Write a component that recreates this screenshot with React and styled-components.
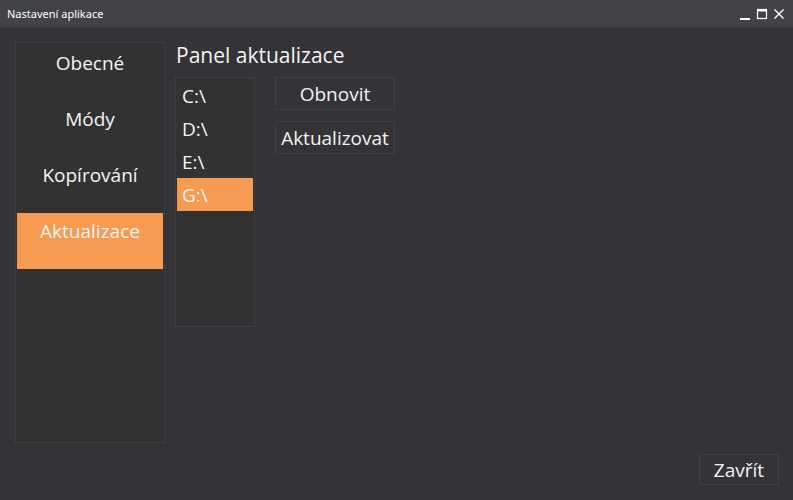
import React from "react";
import styled, { createGlobalStyle } from "styled-components";

const Global = createGlobalStyle`
  html, body { margin: 0; padding: 0; background: #333338; }
  body { font-family: "Open Sans", "Noto Sans", sans-serif; }
  #root { width: 793px; height: 500px; }
`;

const Window = styled.div`
  width: 793px;
  height: 500px;
  background: #333338;
  display: flex;
  flex-direction: column;
  overflow: hidden;
  color: #f2f2f2;
`;

const TitleBar = styled.div`
  height: 28px;
  background: #424347;
  display: flex;
  align-items: center;
  justify-content: space-between;
  padding: 0 8px 0 7px;
  border-bottom: 1px solid #3a3b3f;
  box-sizing: border-box;
`;

const Title = styled.span`
  font-size: 11px;
  color: #ffffff;
  font-family: "Noto Sans", "Open Sans", sans-serif;
`;

const Controls = styled.div`
  display: flex;
  align-items: center;
  gap: 5px;
`;

const Ctl = styled.svg`
  width: 12px;
  height: 12px;
  display: block;
`;

const Body = styled.div`
  flex: 1;
  display: flex;
  flex-direction: column;
  padding: 14px 14px 15px 15px;
`;

const Main = styled.div`
  display: flex;
  gap: 10px;
`;

const Sidebar = styled.div`
  width: 150px;
  height: 401px;
  background: #323232;
  border: 1px solid #3f3f41;
  padding: 2px 1px;
  box-sizing: border-box;
  display: flex;
  flex-direction: column;
`;

const NavItem = styled.div`
  height: 56px;
  text-align: center;
  font-size: 19px;
  line-height: 36px;
  color: #f4f4f4;
  background: ${(p) => (p.$active ? "#f79b53" : "transparent")};
`;

const Content = styled.div`
  display: flex;
  flex-direction: column;
  gap: 8px;
`;

const Heading = styled.div`
  font-size: 21px;
  line-height: 27px;
  color: #f4f4f4;
  margin-left: 1px;
`;

const Row = styled.div`
  display: flex;
  gap: 20px;
  align-items: flex-start;
`;

const DriveList = styled.div`
  width: 80px;
  height: 250px;
  box-sizing: border-box;
  background: #323232;
  border: 1px solid #3f3f41;
  padding: 1px 1px;
  display: flex;
  flex-direction: column;
`;

const Drive = styled.div`
  height: 33px;
  box-sizing: border-box;
  padding: 2px 0 0 5px;
  line-height: 31px;
  font-size: 19px;
  color: #f4f4f4;
  background: ${(p) => (p.$active ? "#f79b53" : "transparent")};
`;

const Buttons = styled.div`
  display: flex;
  flex-direction: column;
  gap: 11px;
`;

const Button = styled.div`
  width: ${(p) => p.$w || 120}px;
  height: ${(p) => p.$h || 33}px;
  box-sizing: border-box;
  border: 1px solid #404045;
  background: #333338;
  display: flex;
  align-items: center;
  justify-content: center;
  font-size: 19px;
  color: #f2f2f2;
`;

const Footer = styled.div`
  margin-top: auto;
  display: flex;
  justify-content: flex-end;
`;

export default function App() {
  return (
    <>
      <Global />
      <Window>
        <TitleBar>
          <Title>Nastavení aplikace</Title>
          <Controls>
            <Ctl viewBox="0 0 12 12">
              <rect x="1" y="10" width="10" height="2" fill="#fff" />
            </Ctl>
            <Ctl viewBox="0 0 12 12">
              <rect x="1.5" y="1.5" width="9" height="9" fill="none" stroke="#fff" strokeWidth="1.2" />
              <rect x="1.5" y="1.5" width="9" height="2" fill="#fff" />
            </Ctl>
            <Ctl viewBox="0 0 12 12">
              <path d="M1.5 1.5 L10.5 10.5 M10.5 1.5 L1.5 10.5" stroke="#fff" strokeWidth="1.4" />
            </Ctl>
          </Controls>
        </TitleBar>
        <Body>
          <Main>
            <Sidebar>
              <NavItem>Obecné</NavItem>
              <NavItem>Módy</NavItem>
              <NavItem>Kopírování</NavItem>
              <NavItem $active>Aktualizace</NavItem>
            </Sidebar>
            <Content>
              <Heading>Panel aktualizace</Heading>
              <Row>
                <DriveList>
                  <Drive>C:\</Drive>
                  <Drive>D:\</Drive>
                  <Drive>E:\</Drive>
                  <Drive $active>G:\</Drive>
                </DriveList>
                <Buttons>
                  <Button>Obnovit</Button>
                  <Button>Aktualizovat</Button>
                </Buttons>
              </Row>
            </Content>
          </Main>
          <Footer>
            <Button $w={80} $h={31}>Zavřít</Button>
          </Footer>
        </Body>
      </Window>
    </>
  );
}
